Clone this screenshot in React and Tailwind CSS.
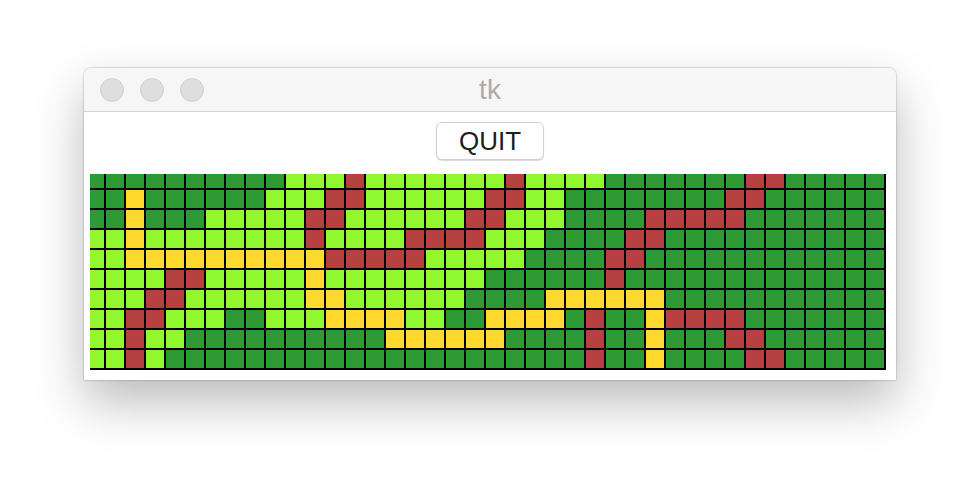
import React from 'react';

// one letter per cell: G dark green, L light green, Y yellow, R red
const rows = [
    'GGGGGGGGGGLLLRLLLLLLLRLLLLGGGGGGGRRGGGGG',
    'GGYGGGGGGLLLRRLLLLLLRRLLGGGGGGGGRRGGGGGG',
    'GGYGGGLLLLLRRLLLLLLRRLLLGGGGRRRRRGGGGGGG',
    'LLYLLLLLLLLRLLLLRRRRLLLGGGGRRGGGGGGGGGGG',
    'LLYYYYYYYYYYRRRRRLLLLLGGGGRRGGGGGGGGGGGG',
    'LLLLRRLLLLLYLLLLLLLLGGGGGGRGGGGGGGGGGGGG',
    'LLLRRLLLLLLYYLLLLLLGGGGYYYYYYGGGGGGGGGGG',
    'LLRRLLLGGLLLYYYYLLGGYYYYGRGGYRRRRGGGGGGG',
    'LLRLLGGGGGGGGGGYYYYYYGGGGRGGYGGGRRGGGGGG',
    'LLRLGGGGGGGGGGGGGGGGGGGGGRGGYGGGGRRGGGGG',
];

const cellColors = {
    G: 'bg-[#2e9a33]',
    L: 'bg-[#8ff82e]',
    Y: 'bg-[#ffd92e]',
    R: 'bg-[#b54040]',
};

const App = () => {
    return (
        <div className="w-[980px] h-[480px] bg-white pt-[68px] pl-[84px] overflow-hidden font-['Liberation_Sans',sans-serif]">
            <div className="w-[812px] h-[312px] bg-white rounded-t-[7px] shadow-[0_22px_50px_rgba(0,0,0,0.27),0_0_2px_rgba(0,0,0,0.4)]">
                <div className="h-[44px] grid grid-cols-[1fr_auto_1fr] items-center px-4 bg-[#f6f6f6] border-b border-[#d4d4d4] rounded-t-[7px]">
                    <div className="flex gap-4">
                        <span className="w-6 h-6 rounded-full bg-[#dedede] border border-[#d2d2d2]" />
                        <span className="w-6 h-6 rounded-full bg-[#dedede] border border-[#d2d2d2]" />
                        <span className="w-6 h-6 rounded-full bg-[#dedede] border border-[#d2d2d2]" />
                    </div>
                    <span className="mt-px text-[28px] leading-none text-[#aeaca7]">tk</span>
                    <span />
                </div>
                <div className="flex justify-center pt-[10px]">
                    <button className="w-[108px] h-[38px] rounded-[6px] bg-white border border-[#d0d0d0] shadow-[0_1px_1px_rgba(0,0,0,0.15)] text-[26px] leading-none text-[#1d1d1d]">
                        QUIT
                    </button>
                </div>
                <div className="ml-[6px] mt-[14px] w-[796px] h-[196px] pr-[2px] pb-[2px] bg-black grid grid-cols-[14px_repeat(39,18px)] grid-rows-[14px_repeat(9,18px)] gap-[2px]">
                    {rows.map((row, r) =>
                        row.split('').map((cell, c) => <div key={`${r}-${c}`} className={cellColors[cell]} />)
                    )}
                </div>
            </div>
        </div>
    );
};

export default App;
